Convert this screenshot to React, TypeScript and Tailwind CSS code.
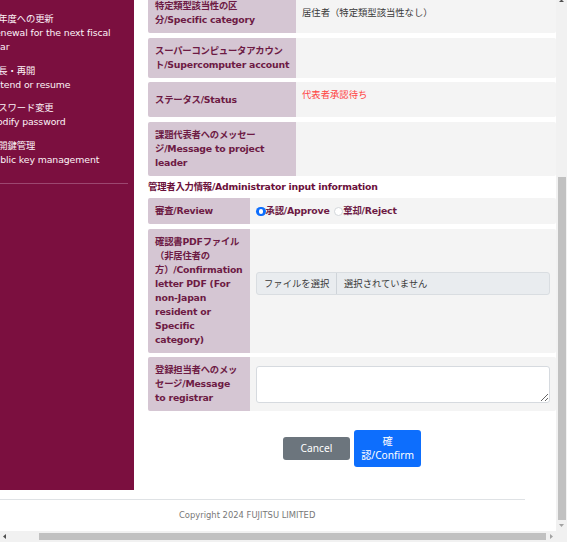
import React from "react";

const MAIN_FONT = "font-['DejaVu_Sans','Noto_Sans_CJK_JP',sans-serif]";
const BTN_FONT = "font-['Noto_Sans','Noto_Sans_CJK_JP',sans-serif]";

type RowProps = {
  labelW: string;
  lines: string[];
  rowClass?: string;
  valueClass?: string;
  children?: React.ReactNode;
};

function Row({ labelW, lines, rowClass = "", valueClass = "items-center", children }: RowProps) {
  return (
    <div className={`flex rounded-[2px] overflow-hidden ${rowClass}`}>
      <div
        className={`${labelW} shrink-0 bg-[#d5c6d3] px-[7px] py-[6px] font-bold tracking-[-0.2px] text-[#6d1a44] flex flex-col justify-center`}
      >
        {lines.map((l, i) => (
          <div key={i} className="whitespace-nowrap">
            {l}
          </div>
        ))}
      </div>
      <div className={`flex-1 min-w-0 bg-[#f4f4f4] px-[6px] flex ${valueClass}`}>{children}</div>
    </div>
  );
}

function SideItem({ jp, en }: { jp: string; en: string[] }) {
  return (
    <div className="flex flex-col">
      <div className="whitespace-nowrap">{jp}</div>
      {en.map((e, i) => (
        <div key={i} className="whitespace-nowrap">
          {e}
        </div>
      ))}
    </div>
  );
}

function Radio({ checked }: { checked: boolean }) {
  return checked ? (
    <span className="block w-[9.5px] h-[9.5px] rounded-full bg-[#0d6efd] flex items-center justify-center shrink-0">
      <span className="block w-[4.5px] h-[4.5px] rounded-full bg-white" />
    </span>
  ) : (
    <span className="block w-[9.5px] h-[9.5px] rounded-full bg-white border border-[#d3d7db] shrink-0" />
  );
}

function Page() {
  return (
    <div className={`${MAIN_FONT} text-[9.33px] leading-[14px]`}>
      <div className="flex h-[490px]">
        {/* Sidebar */}
        <aside className="w-[134px] shrink-0 bg-[#7b0f3f] overflow-hidden text-[#fbf3f7] tracking-[-0.1px]">
          <div className="ml-[-11px] pr-[6px] pt-[12px] flex flex-col">
            <div className="flex flex-col gap-[9.5px]">
              <SideItem jp="次年度への更新" en={["Renewal for the next fiscal", "year"]} />
              <SideItem jp="延長・再開" en={["Extend or resume"]} />
              <SideItem jp="パスワード変更" en={["Modify password"]} />
              <SideItem jp="公開鍵管理" en={["Public key management"]} />
            </div>
            <div className="mt-[16px] h-px bg-[#9c4770]" />
          </div>
        </aside>

        {/* Main */}
        <main className="flex-1 min-w-0 pl-[14px] mt-[-6.6px] flex flex-col">
          <div className="flex flex-col gap-[4.4px]">
            <Row labelW="w-[148px]" lines={["特定類型該当性の区", "分/Specific category"]}>
              <span className="text-[#3a3a3a] whitespace-nowrap">居住者（特定類型該当性なし）</span>
            </Row>
            <Row labelW="w-[148px]" lines={["スーパーコンピュータアカウン", "ト/Supercomputer account"]} />
            <Row
              labelW="w-[148px]"
              lines={["ステータス/Status"]}
              rowClass="h-[35px]"
              valueClass="items-start pt-[5.5px]"
            >
              <span className="text-[#ff4343] whitespace-nowrap">代表者承認待ち</span>
            </Row>
            <Row labelW="w-[148px]" lines={["課題代表者へのメッセー", "ジ/Message to project", "leader"]} />
          </div>

          <div className="my-[4.4px] font-bold tracking-[-0.2px] text-[#6a0f3a] whitespace-nowrap">
            管理者入力情報/Administrator input information
          </div>

          <div className="flex flex-col gap-[4.4px]">
            <Row labelW="w-[102px]" lines={["審査/Review"]}>
              <div className="flex items-center font-bold tracking-[-0.2px] text-[#6d1a44] whitespace-nowrap">
                <Radio checked />
                <span>承認/Approve</span>
                <span className="block ml-[4.3px]">
                  <Radio checked={false} />
                </span>
                <span>棄却/Reject</span>
              </div>
            </Row>
            <Row
              labelW="w-[102px]"
              lines={[
                "確認書PDFファイル",
                "（非居住者の",
                "方）/Confirmation",
                "letter PDF (For",
                "non-Japan",
                "resident or",
                "Specific",
                "category)",
              ]}
            >
              <div className="w-full flex flex-col">
                <div className="w-full h-[23px] flex rounded-[3px] border border-[#d9dde1] bg-[#e9ecef] overflow-hidden text-[#3a3a3a]">
                  <div className="w-[80px] shrink-0 border-r border-[#cfd4d9] flex items-center pl-[7px] whitespace-nowrap">
                    ファイルを選択
                  </div>
                  <div className="flex items-center pl-[7px] whitespace-nowrap">選択されていません</div>
                </div>
                <div className="h-[14px]" />
              </div>
            </Row>
            <Row labelW="w-[102px]" lines={["登録担当者へのメッ", "セージ/Message", "to registrar"]}>
              <textarea
                readOnly
                className="block w-full h-[37px] bg-white border border-[#d6dadf] rounded-[3px] outline-none"
              />
            </Row>
          </div>

          <div className={`mt-[19px] flex justify-center items-center gap-[3.6px] ${BTN_FONT} text-[10.2px] leading-[14.3px] text-white`}>
            <button className="w-[67.5px] py-[4px] rounded-[3px] bg-[#6c757d] text-center">Cancel</button>
            <button className="w-[67.5px] py-[4px] rounded-[3px] bg-[#0d6efd] flex flex-col items-center">
              <span className="whitespace-nowrap">確</span>
              <span className="whitespace-nowrap">認/Confirm</span>
            </button>
          </div>
        </main>
      </div>

      <footer className="mt-[9px] w-[525px] border-t border-[#dfe2e5]">
        <div className="pl-[179px] pt-[9px] text-[8.4px] leading-[12px] text-[#777] whitespace-nowrap">
          Copyright 2024 FUJITSU LIMITED
        </div>
      </footer>
    </div>
  );
}

export default function App() {
  return (
    <div className="w-[567px] h-[542px] flex flex-col overflow-hidden bg-white">
      <div className="flex h-[531px]">
        <div className="w-[556px] h-[531px] overflow-hidden">
          <Page />
        </div>
        {/* vertical scrollbar */}
        <div className="w-[11px] h-[531px] bg-[#f1f1f1] flex flex-col items-center">
          <svg width="5" height="2" viewBox="0 0 5 2" className="block">
            <polygon points="0,2 5,2 2.5,-0.5" fill="#505050" />
          </svg>
          <div className="mt-[175px] h-[343px] w-[8px] bg-[#c1c1c1]" />
          <svg width="5" height="3" viewBox="0 0 5 3" className="block mt-[4px]">
            <polygon points="0,0 5,0 2.5,3" fill="#a3a3a3" />
          </svg>
        </div>
      </div>
      {/* horizontal scrollbar */}
      <div className="flex h-[11px]">
        <div className="w-[556px] bg-[#f1f1f1] flex items-center">
          <svg width="3" height="5" viewBox="0 0 3 5" className="block ml-[3px]">
            <polygon points="3,0 3,5 0,2.5" fill="#505050" />
          </svg>
          <div className="ml-[33px] w-[507px] h-[7px] bg-[#c1c1c1]" />
          <svg width="3" height="5" viewBox="0 0 3 5" className="block ml-[4px]">
            <polygon points="0,0 0,5 3,2.5" fill="#a3a3a3" />
          </svg>
        </div>
        <div className="w-[11px] bg-[#f1f1f1]" />
      </div>
    </div>
  );
}
